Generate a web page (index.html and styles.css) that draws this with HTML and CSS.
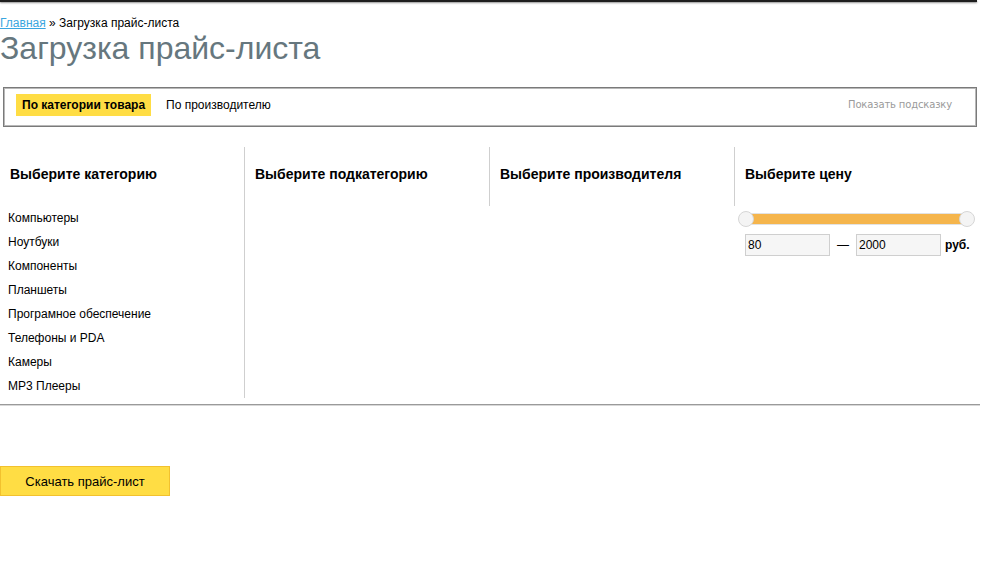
FILE: index.html
```html
<!DOCTYPE html>
<html lang="ru">
<head>
<meta charset="utf-8">
<title>Загрузка прайс-листа</title>
<link rel="stylesheet" href="styles.css">
</head>
<body>
<div class="topbar"></div>
<div class="page">
  <div class="breadcrumb"><a href="#">Главная</a> » Загрузка прайс-листа</div>
  <h1 class="title">Загрузка прайс-листа</h1>

  <div class="panel">
    <div class="tabs">
      <span class="tab tab-active">По категории товара</span>
      <span class="tab">По производителю</span>
    </div>
    <span class="hint">Показать подсказку</span>
  </div>

  <div class="columns">
    <div class="col col-first">
      <div class="col-head">Выберите категорию</div>
      <ul class="cat-list">
        <li>Компьютеры</li>
        <li>Ноутбуки</li>
        <li>Компоненты</li>
        <li>Планшеты</li>
        <li>Програмное обеспечение</li>
        <li>Телефоны и PDA</li>
        <li>Камеры</li>
        <li>MP3 Плееры</li>
      </ul>
    </div>
    <div class="col col-second">
      <div class="col-head">Выберите подкатегорию</div>
    </div>
    <div class="col">
      <div class="col-head col-head-bordered">Выберите производителя</div>
    </div>
    <div class="col">
      <div class="col-head col-head-bordered">Выберите цену</div>
      <div class="slider">
        <div class="track"></div>
        <span class="handle handle-left"></span>
        <span class="handle handle-right"></span>
      </div>
      <div class="price-row">
        <input class="price-input" type="text" value="80">
        <span class="dash">—</span>
        <input class="price-input" type="text" value="2000">
        <span class="currency">руб.</span>
      </div>
    </div>
  </div>
  <div class="divider"></div>

  <button class="download" type="button">Скачать прайс-лист</button>
</div>
</body>
</html>
```

FILE: styles.css
```css
html, body {
  margin: 0;
  padding: 0;
  background: #fff;
}
body {
  font-family: "Liberation Sans", Arial, sans-serif;
  color: #000;
}
.topbar {
  width: 977px;
  height: 2px;
  background: #1e1e1e;
  box-shadow: 0 1px 2px rgba(0, 0, 0, 0.45);
}
.page {
  width: 980px;
}
.breadcrumb {
  margin-top: 14px;
  font-size: 12px;
  line-height: 14px;
}
.breadcrumb a {
  color: #3aa6e0;
  text-decoration: underline;
}
.title {
  margin: 0;
  font-weight: normal;
  font-size: 32px;
  line-height: 36px;
  color: #66777e;
}
.panel {
  margin: 21px 0 0 3px;
  width: 974px;
  height: 40px;
  box-sizing: border-box;
  border: 1px solid #7a7a7a;
  box-shadow: inset 0 0 0 1px #b8b8b8;
  display: flex;
  align-items: flex-start;
  justify-content: space-between;
  padding: 6px 24px 0 12px;
}
.tabs {
  display: flex;
  align-items: center;
  gap: 3px;
}
.tab {
  display: inline-block;
  font-size: 12px;
  line-height: 22px;
  padding: 0 6px;
}
.tab-active {
  background: #ffdd44;
  font-weight: bold;
  margin-right: 6px;
}
.hint {
  font-family: "DejaVu Sans", Tahoma, sans-serif;
  font-size: 10px;
  line-height: 22px;
  color: #9a9a9a;
  letter-spacing: -0.15px;
}
.columns {
  margin-top: 20px;
  display: flex;
}
.col {
  width: 245px;
  box-sizing: border-box;
}
.col-second {
  width: 244px;
}
.col-first {
  border-right: 1px solid #cfcfcf;
}
.col-head {
  height: 59px;
  box-sizing: border-box;
  padding: 19px 0 0 10px;
  font-size: 14px;
  line-height: 16px;
  font-weight: bold;
}
.col-head-bordered {
  border-left: 1px solid #cfcfcf;
}
.cat-list {
  list-style: none;
  margin: 0;
  padding: 0 0 0 8px;
}
.cat-list li {
  font-size: 12px;
  line-height: 24px;
}
.slider {
  position: relative;
  margin: 5px 0 0 4px;
  width: 237px;
  height: 16px;
}
.track {
  position: absolute;
  left: 8px;
  right: 8px;
  top: 2px;
  height: 12px;
  box-sizing: border-box;
  background: #f5b54c;
  border: 1px solid #e2e2e2;
}
.handle {
  position: absolute;
  top: 0;
  width: 16px;
  height: 16px;
  box-sizing: border-box;
  border-radius: 50%;
  background: #f4f4f4;
  border: 1px solid #d6d6d6;
}
.handle-left { left: 0; }
.handle-right { right: 0; }
.price-row {
  margin: 7px 0 0 11px;
  display: flex;
  align-items: center;
}
.price-input {
  width: 85px;
  height: 22px;
  box-sizing: border-box;
  border: 1px solid #cfcfcf;
  background: #f6f6f6;
  font-family: "Liberation Sans", Arial, sans-serif;
  font-size: 12px;
  padding: 0 2px;
  margin: 0;
  color: #000;
}
.dash {
  font-size: 12px;
  margin: 0 7px 0 7px;
}
.currency {
  font-size: 12px;
  font-weight: bold;
  margin-left: 4px;
}
.divider {
  margin-top: 6px;
  height: 1px;
  border-top: 1px solid #9a9a9a;
  background: #d8d8d8;
}
.download {
  margin-top: 60px;
  display: block;
  width: 170px;
  height: 30px;
  box-sizing: border-box;
  background: #ffdd44;
  border: 1px solid #f2c12e;
  font-family: "Liberation Sans", Arial, sans-serif;
  font-size: 13px;
  color: #000;
  padding: 0;
  border-radius: 0;
}
```
